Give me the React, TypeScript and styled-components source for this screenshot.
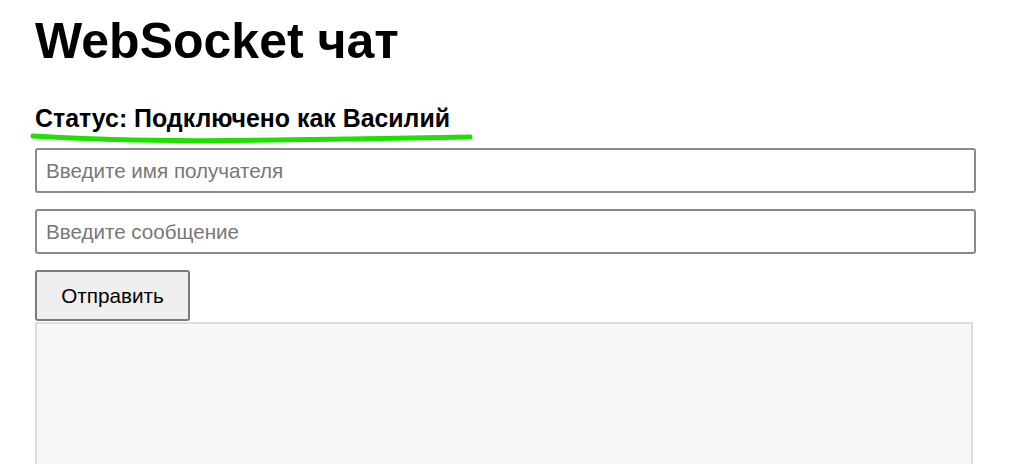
import styled, { createGlobalStyle } from 'styled-components';

const GlobalStyle = createGlobalStyle`
  body {
    margin: 0;
    background: #ffffff;
    font-family: 'Liberation Sans', Arial, sans-serif;
    overflow: hidden;
  }
`;

const App = () => {
  return (
    <>
      <GlobalStyle />
      <Page>
        <Title>WebSocket чат</Title>
        <StatusWrap>
          <Status>Статус: Подключено как Василий</Status>
          <Underline viewBox='0 0 450 16' aria-hidden='true'>
            <path
              d='M3 7 C 60 10.5 140 12 200 11.5 S 380 9 440 8'
              fill='none'
              stroke='#1fe000'
              strokeWidth='5'
              strokeLinecap='round'
            />
          </Underline>
        </StatusWrap>
        <Field placeholder='Введите имя получателя' />
        <Field placeholder='Введите сообщение' />
        <SendButton>Отправить</SendButton>
        <Messages />
      </Page>
    </>
  );
};

const Page = styled.div`
  display: flex;
  flex-direction: column;
  align-items: flex-start;
  padding: 16px 0 0 35px;
`;

const Title = styled.h1`
  margin: 0;
  font-size: 50px;
  line-height: 50px;
  font-weight: bold;
  color: #000;
`;

const StatusWrap = styled.div`
  position: relative;
  margin-top: 40px;
`;

const Status = styled.h3`
  margin: 0;
  font-size: 24.9px;
  line-height: 25px;
  font-weight: bold;
  color: #000;
`;

const Underline = styled.svg`
  position: absolute;
  left: -5px;
  top: 23px;
  width: 450px;
  height: 16px;
  overflow: visible;
`;

const Field = styled.input`
  box-sizing: border-box;
  width: 941px;
  height: 45px;
  margin-top: 17px;
  padding: 0 9px;
  border: 2px solid #8a8a8a;
  border-radius: 3px;
  font-family: 'Liberation Sans', Arial, sans-serif;
  font-size: 20.6px;
  color: #000;
  background: #fff;

  & + & {
    margin-top: 16px;
  }

  &::placeholder {
    color: #777;
  }
`;

const SendButton = styled.button`
  box-sizing: border-box;
  width: 155px;
  height: 51px;
  margin-top: 16px;
  border: 2px solid #7a7a7a;
  border-radius: 3px;
  background: #efefef;
  font-family: 'Liberation Sans', Arial, sans-serif;
  font-size: 20.7px;
  color: #000;
`;

const Messages = styled.div`
  box-sizing: border-box;
  width: 938px;
  height: 160px;
  margin-top: 1px;
  border: 2px solid #dddddd;
  background: #f8f8f8;
`;

export default App;
